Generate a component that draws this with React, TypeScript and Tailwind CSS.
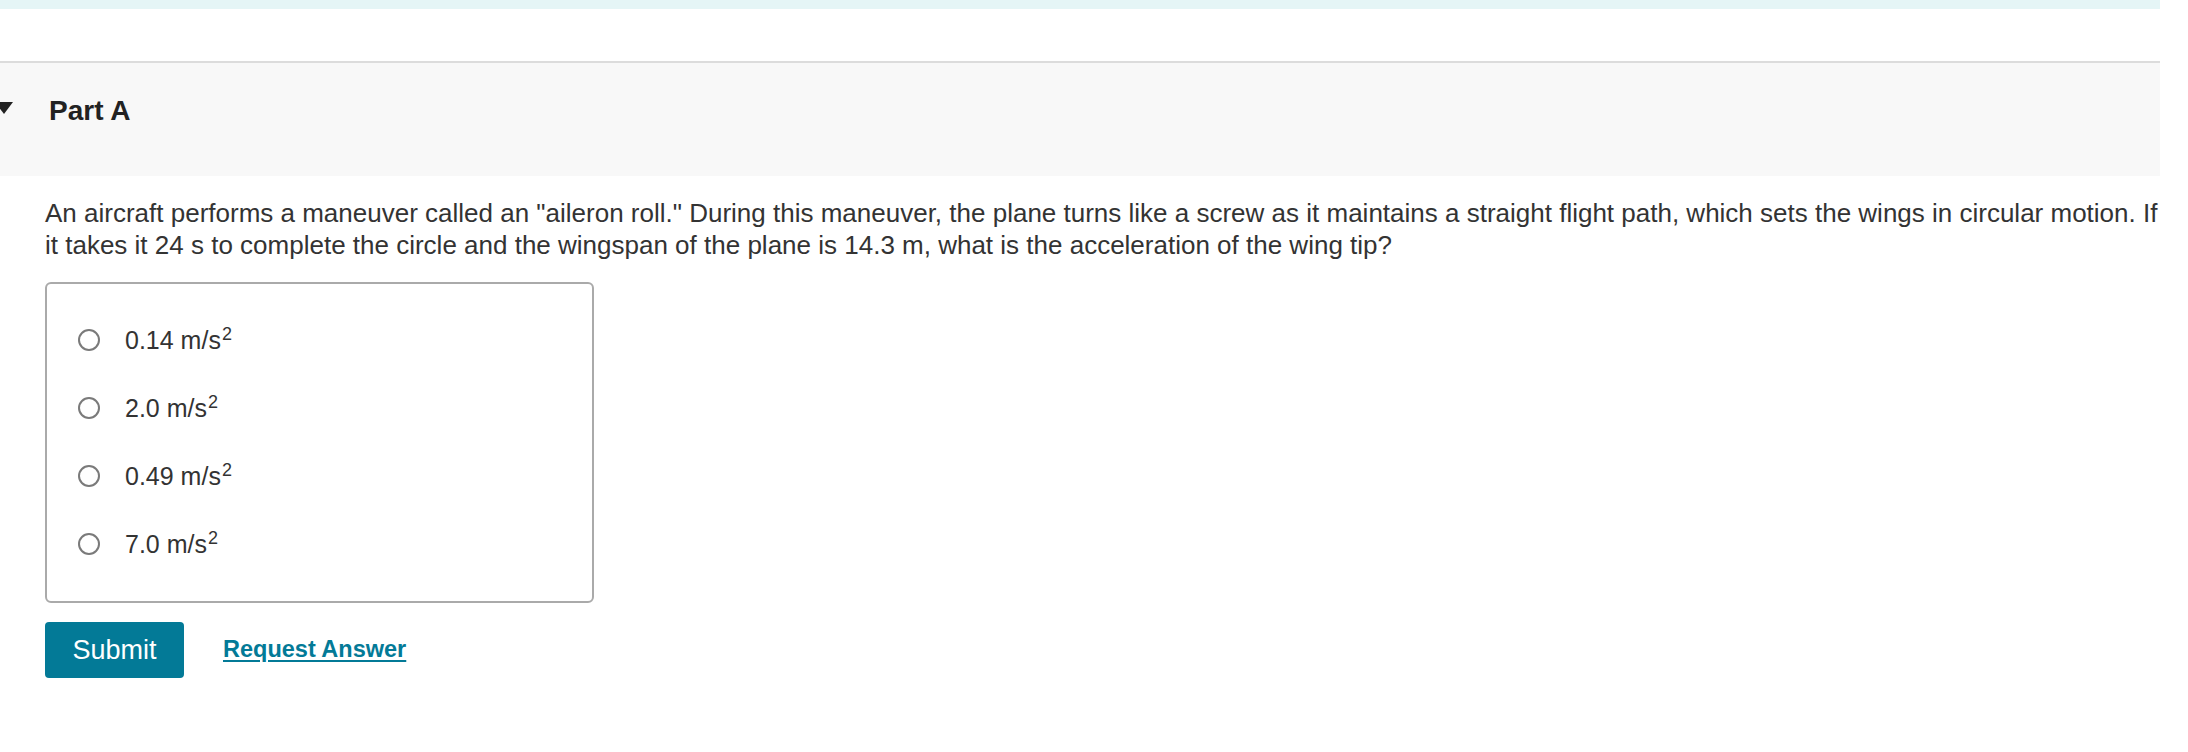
const options = ['0.14', '2.0', '0.49', '7.0'];

function Radio() {
  return <span className="h-[22px] w-[22px] shrink-0 rounded-full border-2 border-[#7a7a7a] bg-white" />;
}

export default function App() {
  return (
    <div className="w-[2160px] bg-white font-['Liberation_Sans',Arial,sans-serif] text-[#333]">
      {/* Top strip */}
      <div className="h-[9px] bg-[#e5f5f6]" />
      <div className="h-[52px]" />

      {/* Part header */}
      <div className="flex items-start border-t-2 border-[#dcdcdc] bg-[#f8f8f8] pb-[50px] pt-[32px]">
        <svg width="13" height="12" viewBox="0 0 13 12" className="mt-[7px] shrink-0">
          <polygon points="-5,0 13,0 4,12" fill="#222" />
        </svg>
        <h2 className="ml-[36px] text-[28px] font-bold leading-[31px] text-[#222]">Part A</h2>
      </div>

      {/* Question */}
      <div className="pl-[45px] pt-[21px]">
        <p className="w-[2122px] text-[26px] leading-[32px]">
          An aircraft performs a maneuver called an "aileron roll." During this maneuver, the plane turns like a screw as
          it maintains a straight flight path, which sets the wings in circular motion. If it takes it 24 s to complete
          the circle and the wingspan of the plane is 14.3 m, what is the acceleration of the wing tip?
        </p>

        {/* Choices */}
        <div className="mt-[21px] flex w-[549px] flex-col rounded-[6px] border-2 border-[#aaa] pb-[23px] pl-[31px] pt-[22px]">
          {options.map((o) => (
            <label key={o} className="flex h-[68px] items-center">
              <Radio />
              <span className="ml-[25px] text-[25px] leading-none">
                {o} m/s
                <sup className="top-[-9px] ml-[1px] text-[18px]">2</sup>
              </span>
            </label>
          ))}
        </div>

        {/* Actions */}
        <div className="mt-[19px] flex items-center pb-[74px]">
          <button className="flex h-[56px] w-[139px] items-center justify-center rounded-[4px] bg-[#037a97] text-[27px] text-white">
            Submit
          </button>
          <a href="#" className="ml-[39px] text-[23.5px] font-bold text-[#037a97] underline underline-offset-[3px]">
            Request Answer
          </a>
        </div>
      </div>
    </div>
  );
}
